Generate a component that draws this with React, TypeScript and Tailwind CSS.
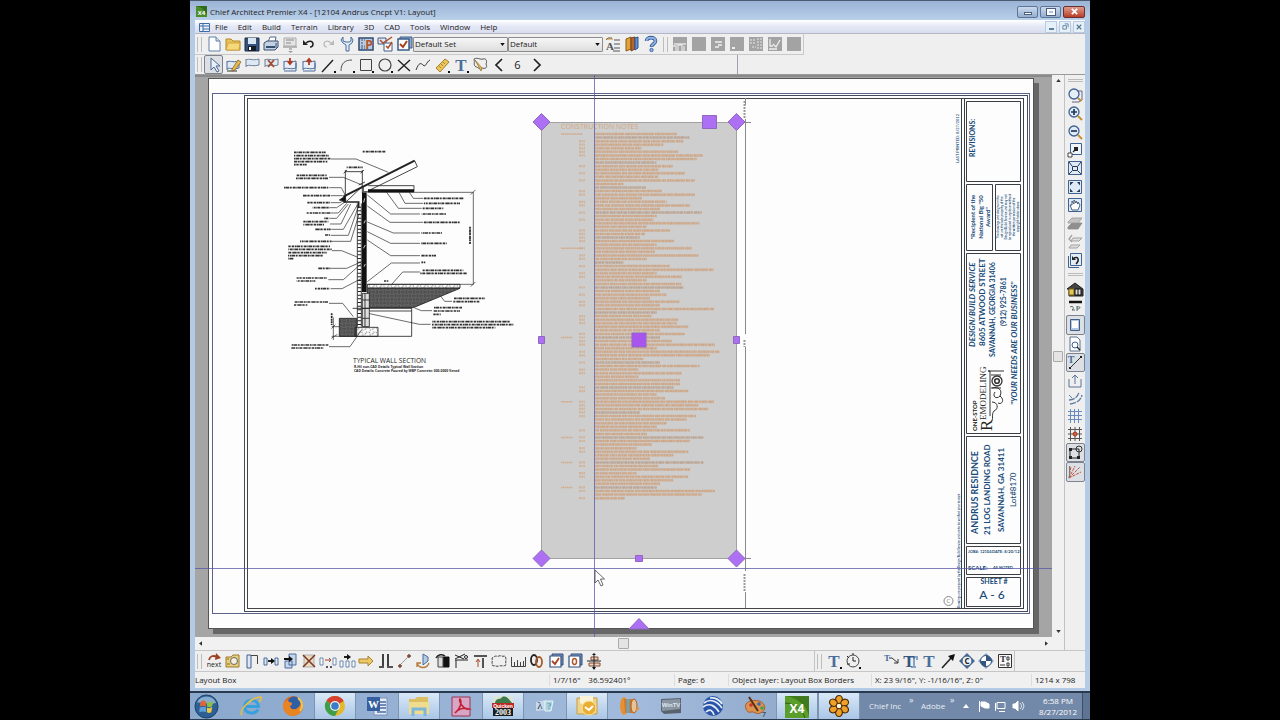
import React from "react";

type Kids = { children?: React.ReactNode };

const NAVY = "#4a6d9c";
const INK = "#222";

function Ico({ children }: Kids) {
  return (
    <svg viewBox="0 0 18 18" className="h-[18px] w-[18px] shrink-0" fill="none" aria-hidden="true">
      {children}
    </svg>
  );
}

function P({ d, c = INK, w = 1, f = "none", dash }: { d: string; c?: string; w?: number; f?: string; dash?: string }) {
  return <path d={d} stroke={c} strokeWidth={w} fill={f} strokeDasharray={dash} />;
}

function Glyph({ t, x = 9, y = 14, s = 16, c = NAVY, serif = true }: { t: string; x?: number; y?: number; s?: number; c?: string; serif?: boolean }) {
  return (
    <text x={x} y={y} fontSize={s} fontWeight="700" fill={c} textAnchor="middle" fontFamily={serif ? "Liberation Serif, serif" : "Open Sans, sans-serif"}>
      {t}
    </text>
  );
}

const wall = "M3 5V14M3 6C6 4 8 7 15 5V12C9 14 6 11 3 13";
const pencil = <P d="M8 13L14 4L17 6L11 14L8 15Z" c="#7a5a20" f="#e5b84e" w={0.7} />;
const redArrowDown = <P d="M9 2V7M6.500 5L9 8L11.500 5" c="#b03a20" w={1.800} />;
const redArrowUp = <P d="M9 9V4M6.500 6L9 3L11.500 6" c="#b03a20" w={1.800} />;
const dot = <P d="M15 15H17V17H15Z" c="none" f="#111" />;

type Tool = [string, React.ReactNode, boolean?];

const fileTools: Tool[] = [
  ["New", <><P d="M4 2H11L15 6V16H4Z" c="#5f7fa8" f="#fff" /><P d="M11 2V6H15" c="#5f7fa8" f="#cfe0f2" /></>],
  ["Open", <><P d="M2 4H7L9 6H16V15H2Z" c="#b58a2b" f="#e9c154" /><P d="M2 15L4 8H16L15 15Z" c="#c59a35" f="#f5d878" w={0.700} /></>],
  ["Save", <><P d="M2 3H16V16H2Z" c="#1d2c44" f="#34527d" /><P d="M5 3H13V9H5Z" c="none" f="#d7e4f2" /><P d="M5 11H13V16H5Z" c="none" f="#141c28" /><P d="M6 12H8V15H6Z" c="none" f="#fff" /></>],
  ["Print", <><P d="M6 7L8 2H14L13 7" c="#516a8e" f="#fff" /><P d="M2 8L5 6H16V12L13 15H2Z" c="#38506f" f="#c3d1e2" /><P d="M4 12H13" c="#38506f" w={2} /><P d="M14 8V13" c="#38506f" /></>],
  ["Print preview", <><P d="M3 3H15V11H3Z" c="#aaa" f="#e4e4e4" /><P d="M5 5H13M5 8H10M2 12H16M8 14H11" c="#a6a6a6" w={1.500} /><P d="M7 16H12L9.500 18Z" c="none" f="#999" /></>],
  ["Undo", <><P d="M6 8C9 5 13 6 13 9C13 11 12 12 10 12" w={1.500} /><P d="M3 5V10H8Z" c="none" f={INK} /></>],
  ["Redo", <><P d="M12 8C9 5 5 6 5 9C5 11 6 12 8 12" c="#b9b9b9" w={1.200} /><P d="M15 5V10H10Z" c="none" f="#b9b9b9" /></>],
  ["Preferences", <><P d="M5 2L3 5L5 8L8 10V16H11V10L14 8L15 5L13 2V6L11 7H8L5 6Z" c="#4b6f9e" f="#dce9f6" /></>],
  ["Plan", <><P d="M2 3H16V15H2Z" c="#2f4a72" f="#b9cce4" w={1.500} /><P d="M4 5H8M4 8H7M4 11H8M4 13H8" c="#456" dash="2 1" /><Glyph t="P" x={12} y={14} s={12} c="#b5532a" serif={false} /></>],
  ["Default settings", <><P d="M2 3H10V9H2Z" c="#3c5c88" f="#dfe9f4" /><P d="M8 8H16V16H8Z" c="#3c5c88" f="#fff" /><P d="M4 5L7 8L16 2M10 11L12 13L16 7" c="#b04a28" w={1.500} /></>],
  ["Display options", <><P d="M5 2H17V13H5Z" c="#3c5c88" f="#8fabcf" /><P d="M3 4H14V15H3Z" c="#3c5c88" f="#fff" w={1.500} /><P d="M5 9L8 12L12 6" c="#a8431f" w={2} /></>],
];

const helpTools: Tool[] = [
  ["Text style", <><P d="M2 5L4 3H8M10 5H16M10 9H16M10 13H16M9 16H16" c="#555" /><Glyph t="A" x={6} y={15} s={11} c="#555" /><P d="M2 4H9" c="#c98b2d" /></>],
  ["Library browser", <><P d="M3 4L8 2V14L3 16Z" c="#8a5a1c" f="#e2a23a" /><P d="M8 3L12 2V14L8 16Z" c="#7c3f1a" f="#b8652c" /><P d="M12 3L15 2V13L12 15Z" c="#2d5590" f="#5f92d2" /></>],
  ["Help", <><P d="M4.500 6C4.500 1.500 13.500 1.500 13.500 6C13.500 9 9.500 9 9.500 12" c="#2d5596" w={3.600} /><P d="M4.500 6C4.500 1.500 13.500 1.500 13.500 6C13.500 9 9.500 9 9.500 11.600" c="#8fb2e2" w={2} /><circle cx="9.500" cy="15" r="1.700" fill="#8fb2e2" stroke="#2d5596" strokeWidth=".8" /></>],
];

const grayBox = <P d="M2 2H16V16H2Z" c="none" f="#a3a3a3" />;
const grayTools: Tool[] = [
  ["Elevation", <>{grayBox}<P d="M2 11H5V16M7 16V10H11V16M13 11V16M3 9H15" c="#e4e4e4" w={1.300} /></>],
  ["Blank view", grayBox],
  ["Cross section", <>{grayBox}<P d="M6 7H13M9 10H13M6 12H10" c="#efefef" w={1.500} /></>],
  ["Detail", <>{grayBox}<P d="M4 13H7" c="#eee" w={2} /></>],
  ["Schedule", <>{grayBox}<P d="M3 5H9M3 8H9M10 4H15M10 7H15M10 10H15M10 13H15M5 12H9" c="#e8e8e8" dash="2 1" /></>],
  ["Graph", <>{grayBox}<P d="M4 4V11H7M7 9L10 12L14 5M3 14H11" c="#efefef" w={1.300} /></>],
  ["Section view", grayBox],
];

const editTools: Tool[] = [
  ["Select objects", <P d="M6 2V14L9 11L12 16L14 15L11 10H15Z" c="#4e6a92" f="#e8f0f8" />, true],
  ["Edit layout box", <><P d={wall} c={NAVY} f="#dfe9f3" /><P d="M3 15H13" c="#333" />{pencil}</>],
  ["Layout page", <><P d="M3 3V11M3 4C6 2 9 5 16 3V9C10 11 6 8 3 10" c="#6f8299" f="#dfe9f3" /></>],
  ["Delete page", <><P d="M3 3V11M3 4C6 2 9 5 16 3V9C10 11 6 8 3 10" c="#6f8299" f="#dfe9f3" /><P d="M6 4L12 11M12 4L6 11" c="#a34b2c" w={1.800} /></>],
  ["Import page", <><P d={wall} c={NAVY} f="#e8eff8" /><P d="M3 15H15V7" c={NAVY} />{redArrowDown}</>],
  ["Export page", <><P d={wall} c={NAVY} f="#e8eff8" /><P d="M3 15H15V7" c={NAVY} />{redArrowUp}</>],
  ["Line", <><P d="M3 16L14 4" w={1.400} />{dot}</>],
  ["Arc", <><P d="M3 15C3 7 7 4 14 4" c="#555" />{dot}</>],
  ["Box", <><P d="M3.500 3.500H14.500V14.500H3.500Z" c="#444" />{dot}</>],
  ["Circle", <><circle cx="9" cy="9" r="6" stroke="#444" strokeWidth="1.200" />{dot}</>],
  ["Cross marker", <P d="M3 4L15 15M15 4L3 15" w={1.400} />],
  ["Spline", <P d="M2 14C5 6 7 7 9 9C12 12 12 6 16 4" c="#333" />],
  ["Measure", <><P d="M3 12L12 3L16 6L7 16Z" c="#a97f25" f="#ebc65d" /><P d="M6 10L8 12M8 8L10 10M10 6L12 8" c="#8f6a1e" w={0.700} />{dot}</>],
  ["Text", <><Glyph t="T" y={15} s={17} />{dot}</>],
  ["Revision cloud", <><P d="M3 3C7 1 9 4 12 3C16 2 16 6 15 8C17 12 14 13 11 12C8 14 7 11 5 11C2 9 4 7 3 3Z" c="#555" /><P d="M4 4L10 15L11 12Z" c="#8a6820" f="#e4bf5e" w={0.700} /></>],
  ["Previous page", <P d="M12 3L6 9L12 15" w={1.700} />],
];

const sideTop: Tool[] = [
  ["Zoom window", <><P d="M10 5H16V14L13 16H6" c="#667" f="#eef" /><circle cx="8" cy="8" r="5" stroke="#3f6390" strokeWidth="1.300" fill="#e6eff8" /><P d="M12 12L15 15" c="#c29034" w={2} /></>],
  ["Zoom in", <><circle cx="8" cy="8" r="5" stroke="#3f6390" strokeWidth="1.300" fill="#dfeaf6" /><P d="M5 8H11M8 5V11" c="#203a5c" w={1.700} /><P d="M12 12L16 16" c="#c29034" w={2} /></>],
  ["Zoom out", <><circle cx="8" cy="8" r="5" stroke="#3f6390" strokeWidth="1.300" fill="#dfeaf6" /><P d="M5 8H11" c="#203a5c" w={1.700} /><P d="M12 12L16 16" c="#c29034" w={2} /></>],
  ["Undo zoom", <><P d="M4.500 2.500H15.500V13.500H4.500Z" c="#3f6390" f="#eef4fa" /><P d="M2 12H6V16H2Z" c="#444" f="#fff" /><P d="M7 11L10 8" w={1.300} /><P d="M8 6H12V10H8Z" c="none" f={INK} /></>],
  ["Fill window", <><P d="M2.500 2.500H15.500V15.500H2.500Z" c="#3f6390" f="#dfeaf6" /><P d="M6.500 7.500H11.500V11.500H6.500ZM3 3L6 7M15 3L12 7M3 15L6 12M15 15L12 12" c="#26384e" /></>],
  ["Fill building", <><P d="M2.500 2.500H15.500V15.500H2.500Z" c="#3f6390" f="#dfeaf6" /><P d="M4 7.500V4L7.500 4ZM11 4H14V7.500ZM14 11V14H10.500ZM7 14H4V10.500Z" c="none" f="#26384e" /></>],
  ["Pan", <><P d="M2.500 2.500H15.500V15.500H2.500Z" c="#3f6390" f="#dfeaf6" /><P d="M6 14L4 9L6 9V5L8 8V4L10 7V5L12 8V6L14 9L12 14Z" c="#3c516e" f="#fff" w={0.900} /></>],
  ["Layers up", <><P d="M2 13L6 9H16L12 15H2Z" c="#8d8d8d" f="#8f8f8f" w={0.800} /><P d="M2 8L6 4H16L12 9H2Z" c="#999" f="#c4c4c4" w={0.800} /></>],
  ["Layers down", <><P d="M7 5H16L13 8H5ZM5 12H14L11 15H3Z" c="#a3a3a3" f="#dedede" /><P d="M6 2L3 6L6 9" c="#a3a3a3" w={1.300} /></>],
  ["Refresh view", <><P d="M4.500 2.500H15.500V14.500H4.500Z" c="#3f6390" f="#e4edf6" /><P d="M2.500 5V16.500H13" c="#3f6390" /><P d="M8 7C12 5 14 9 10 13" w={1.500} /><P d="M6 5V9H10Z" c="none" f={INK} /></>],
];

const sideBottom: Tool[] = [
  ["House view", <><P d="M1 9L9 3L17 9V16H3V9Z" c="#222" f="#444" /><P d="M3 9H8V15H3Z" c="#7a6418" f="#e6c656" /><P d="M9 9H15V15H9Z" c="#111" f="#ddd" /><P d="M12 9V15" c="#111" /></>],
  ["Sound and line", <><P d="M3 5H16" c="#111" w={2.500} /><P d="M4 10C8 8 8 12 6 13H9M11 9V14M11 10C15 9 15 12 11 12" c="#566" /></>],
  ["Color view", <><P d="M4.500 3.500H13.500V14.500H4.500Z" c="#3f5f8a" f="#b4c8e0" /><P d="M6 5H12V12H6Z" c="none" f="#fff" /></>, true],
  ["Page preview", <><P d="M4 2H11L14 5V16H4Z" c="#57708f" f="#fff" /><circle cx="9" cy="10" r="3" stroke="#3f6390" /><P d="M11 12L14 15" w={1.300} /></>],
  ["Temporary dimensions", <><P d="M4 15L15 4" c="#333" /><P d="M3 14H5V16H3ZM14 3H16V5H14Z" c="none" f="#222" /><Glyph t="T" x={5} y={10} s={10} /></>, true],
  ["Reference floor", <><P d="M3 7V15H15V7M9 12V4M6 6L9 3L12 6" c="#5a759b" /></>],
  ["Arc centers", <><P d="M3 10C8 10 12 7 13 2M4 14C11 13 15 10 16 5" c="#5f7da7" w={1.300} dash="6 1" /><P d="M3 5L6 8" c="#5f7da7" /></>],
  ["Grid", <P d="M2 4.500H16M2 8.500H16M2 12.500H16M4.500 2V16M8.500 2V16M12.500 2V16" c="#6a8abb" />],
  ["Grid snaps", <><P d="M2 4.500H16M2 9H16M2 13.500H16M4.500 2V16M9 2V16M13.500 2V16" c="#555" /><circle cx="9" cy="9" r="2" stroke="#a3371f" fill="#d0603f" /></>],
  ["Object snaps", <><P d="M4 5H13V14H4Z" /><P d="M3 4H6V7H3ZM3 12H6V15H3ZM11 12H14V15H11Z" c="none" f="#222" /><circle cx="13" cy="5" r="3" stroke="#333" /></>, true],
  ["Angle snaps", <><P d="M3 15L5 3M3 15L9 3M3 15L14 4M3 15L15 9" c="#c2533f" dash="3 1" /><P d="M3.500 3V15" c="#777" /></>, true],
];

const post = (x: number) => `M${x} 6H${x + 3}V13H${x}Z`;
const bottomTools: Tool[] = [
  ["Next", <><P d="M4 8C5 4 8 3 12 5" c="#9b4424" w={1.800} /><P d="M11 1L16 6L10 8Z" c="none" f="#9b4424" /><text x="9" y="15" fontSize="7" textAnchor="middle" fill="#222" fontFamily="Open Sans, sans-serif">next</text></>],
  ["Camera", <><P d="M2 5H7L9 3H15V15H2Z" c="#9d7a30" f="#e8cf79" /><circle cx="10" cy="9" r="3.500" stroke="#666" fill="#f4f0dd" /><P d="M3 7H5M3 12H6" c="#8a6820" /></>],
  ["Open object", <><P d="M4 3H8V16H4Z" c="#3f5f8a" f="#dbe7f4" /><P d="M8 3.500H14.500V12" c="#444" /></>],
  ["Move right", <><P d={post(2) + post(13)} c={NAVY} f="#dbe7f4" /><P d="M6 9H10" w={2} /><P d="M9 6L13 9L9 12Z" c="none" f="#111" /></>],
  ["Transform", <><P d="M8 2H15V13H8ZM4 9H11V16H4Z" c={NAVY} f="#c5d6ea" /><P d="M3 7H9" c="#111" w={2} /><P d="M8 4L12 7L8 10Z" c="none" f="#111" /></>],
  ["Delete", <><P d="M4 3H14V15H4Z" c="#999" f="#ead9c4" w={0.700} /><P d="M3 3L15 15M15 3L3 15" c="#7a3a20" w={1.500} /></>],
  ["Copy distance", <><P d={post(1) + post(14)} c={NAVY} f="#fff" w={0.800} /><P d="M6 8H12M10 6L12 8L10 10" c="#a34b2c" /><P d="M7 15H9M11 15H13" w={1.500} /></>],
  ["Multiple copy", <><P d="M2 9H5V15H2ZM8 9H11V15H8ZM14 9H17V15H14Z" c={NAVY} f="#fff" w={0.800} /><P d="M6 5H10" w={2} /><P d="M9 2L13 5L9 8Z" c="none" f="#111" /></>],
  ["Point to point", <P d="M2 7H11V4L16 9L11 14V11H2Z" c="#a9812c" f="#ecc866" />],
  ["Align", <P d="M7 2V14M12 2V14M3 15H8M11 15H17" w={1.700} />],
  ["Extend line", <><P d="M4 14L14 4" c="#777" dash="2 1" /><P d="M3 14H7M5 12V16M12 4H16M14 2V6" c="#7a4030" w={1.400} /></>],
  ["Rotate", <><P d="M9 2V13L14 9V5Z" c="#466b9a" f="#b7cbe3" /><P d="M3 11C5 17 13 17 15 11M3 15V11H7" c="#b67834" w={1.300} /></>],
  ["Reflect", <><P d="M10 5H16V15H10Z" c="#111" f="#111" /><P d="M5 5H10V15H5Z" c="#444" f="#ddd" /><P d="M3 6C5 2 9 2 12 4" w={1.500} /></>],
  ["Trim", <><P d="M3 8H16M4 8V16M3 3L12 7M3 7L13 2" /><circle cx="14" cy="5" r="1.500" stroke="#222" /></>],
  ["Fillet", <><P d="M3 4H16M12 6V16" w={1.500} /><P d="M7 15V8M5 10L7 7L9 10" c="#a34b2c" /></>],
  ["Polyline", <P d="M4 5C6 3 7 5 9 4C11 3 12 5 15 4C17 7 15 9 16 13C13 15 12 13 9 14C6 15 5 13 3 14C1 11 3 9 2 6Z" c="#444" dash="3 1" />],
  ["Ruler", <P d="M2.500 5V14.500H16.500V5M5.500 10V14M8.500 8V14M11.500 10V14M14.500 9V14" c="#444" />],
  ["Link", <><ellipse cx="6" cy="8" rx="3" ry="5" stroke="#222" strokeWidth="1.800" /><ellipse cx="11" cy="10" rx="3" ry="5" stroke="#a55a2c" strokeWidth="1.800" /></>],
  ["Check layers", <><P d="M5 2H16V13H5Z" c="#304f7c" f="#7898c4" /><P d="M3 4H14V15H3Z" c="#304f7c" f="#fff" w={1.200} /><P d="M5 9L8 12L12 6" c="#a8431f" w={1.800} /></>],
  ["Zero layers", <><P d="M5 2H16V13H5Z" c="#304f7c" f="#7898c4" /><P d="M3 4H14V15H3Z" c="#304f7c" f="#fff" w={1.200} /><ellipse cx="8.500" cy="9.500" rx="2" ry="3" stroke="#b0552b" strokeWidth="1.500" /></>],
  ["Center", <><P d="M6 5H13V8H6ZM4 11H15V14H4Z" c="#8a4a30" f="#e8d5c5" /><P d="M9 2V17M2 9H16" /><P d="M7 3H11L9 1ZM7 15H11L9 18Z" c="none" f="#111" /></>],
];

const textToolsA: Tool[] = [
  ["Text tool", <><Glyph t="T" y={15} s={17} />{dot}</>],
  ["Clock tool", <><circle cx="9" cy="9" r="6" stroke="#444" /><P d="M9 5V9H12M9 1V3M3 4L5 6" /><P d="M3 12H6" />{dot}</>],
];
const textToolsB: Tool[] = [
  ["Leader line", <><Glyph t="T" x={5} y={9} s={9} /><P d="M7 6H10L16 11M16 7V11H12" c="#333" /></>],
  ["Rich text", <><P d="M6 5H16V8M13 5V15M10 15H15" c="#8ba3c2" w={2} /><Glyph t="T" x={8} y={15} s={17} c="#34557f" /></>],
  ["Plain text", <Glyph t="T" y={15} s={17} />],
  ["Arrow", <><P d="M3 16L13 5" w={1.600} /><P d="M16 2L14 9L9 4Z" c="none" f="#111" /></>],
  ["Callout", <><P d="M9 1L17 9L9 17L1 9Z" c="none" f="#4a6d9c" /><circle cx="9" cy="9" r="5" fill="#eef4fa" stroke="#34557f" /><Glyph t="C" y={12} s={8} c="#222" serif={false} /></>],
  ["Marker", <><P d="M9 1L17 9L9 17L1 9Z" c="none" f="#8ba3c2" /><circle cx="9" cy="9" r="5.500" fill="#fff" stroke="#34557f" /><P d="M9 9V3.500A5.500 5.500 0 0 1 14.500 9ZM9 9V14.500A5.500 5.500 0 0 1 3.500 9Z" c="none" f="#34557f" /></>],
  ["Text macro", <><P d="M2.500 2.500H15.500V15.500H2.500Z" c="#333" f="#f8f8f8" /><Glyph t="T" x={7} y={10} s={9} c="#333" /><P d="M11 5H13V8H11ZM11 11H13V14H11ZM4 13H9" c="#333" /></>],
];

function Tools({ items, vertical }: { items: Tool[]; vertical?: boolean }) {
  return (
    <>
      {items.map(([label, icon, on]) => (
        <button
          key={label}
          type="button"
          aria-label={label}
          className={
            (vertical ? "w-[19px] min-h-0 flex-1 " : "h-[19px] w-[19px] ") +
            "flex shrink-0 items-center justify-center " +
            (on ? "rounded-[2px] border border-[#7d838c] bg-[#dcdfe4]" : "")
          }
        >
          <Ico>{icon}</Ico>
        </button>
      ))}
    </>
  );
}

function Grip() {
  return <span className="mx-[2px] h-[15px] w-[5px] shrink-0 border-x border-[#bdbdbd]" />;
}

function Pick({ label, value }: { label: string; value: string }) {
  return (
    <div className="relative h-[15px] w-[95px] shrink-0">
      <select
        aria-label={label}
        defaultValue={value}
        className="h-full w-full appearance-none rounded-[1px] border border-[#8c8c8c] bg-gradient-to-b from-[#f6f6f6] to-[#dedede] pl-px text-[8px] leading-[12px]"
      >
        <option>{value}</option>
      </select>
      <svg viewBox="0 0 6 4" className="pointer-events-none absolute right-[3px] top-[6px] h-[3px] w-[5px]" aria-hidden="true">
        <path d="M0 0H6L3 4Z" fill="#111" />
      </svg>
    </div>
  );
}

const noteStart = 134;
const notePitch = 3.57;
const noteEnds = [
  440, 478, 462, 400, 335, 445, 518, 500, 380, 428, 385, 465, 385, 495, 280, 348, 395, 495, 335, 410, 480, 390, 515, 380, 370, 508,
  350, 420, 345, 330, 432, 380, 485, 375, 505, 350, 280, 420, 550, 380, 455, 350, 455, 460, 390, 410, 360, 448, 390, 552, 380, 365,
  445, 440, 475, 390, 465, 390, 425, 555, 380, 568, 540, 340, 390, 508, 325, 455, 325, 450, 450, 430, 475, 380, 405, 552, 505, 535,
  330, 498, 470, 410, 380, 480, 350, 520, 480, 365, 320, 475, 430, 360, 520, 385, 480, 320, 475, 430, 390, 380, 555, 515, 285,
];
const sectionRows = [0, 32, 57, 75, 85, 92, 99];
const itemRows = [2, 3, 4, 5, 6, 9, 11, 13, 16, 17, 19, 20, 22, 24, 27, 28, 29, 30, 32, 34, 35, 37, 39, 40, 43, 45, 47, 48, 51, 52, 53, 56, 57, 58, 59, 61, 62, 64, 66, 67, 71, 72, 75, 76, 77, 78, 79, 83, 85, 86, 88, 89, 92, 93, 95, 96, 99, 100, 102];
const dashes = ["9 1 5 1 13 1", "6 1 11 1 4 1", "14 1 7 1 9 1", "4 1 8 1 12 1 5 1"];
const strokesOfText = ["1.3 .7 2.1 .5 .8 .6", ".9 .5 1.7 .8 2.6 .6", "2.3 .6 1.1 .7", "1.6 .5 .7 .6 2.9 .7"];

function Notes() {
  return (
    <g>
      <text x="561" y="129" fontSize="7" fill="#d3a67c" fontFamily="Open Sans, sans-serif">CONSTRUCTION NOTES</text>
      {noteEnds.map((end, i) => {
        const y = noteStart + i * notePitch;
        const right = 530 + end / 3;
        return (
          <g key={i} stroke="#d2a37c">
            <path d={`M595 ${y}H${right}`} strokeWidth="3" strokeDasharray={dashes[i % 4]} opacity="0.4" />
            <path d={`M595 ${y}H${right}`} strokeWidth="2" strokeDasharray={strokesOfText[(i * 3 + (i >> 2)) % 4]} strokeDashoffset={i * 1.7} stroke={i % 7 === 1 ? "#a99a90" : "#cd9d75"} opacity="0.65" />
            {sectionRows.includes(i) && <path d={`M561 ${y}H${i === 0 || i === 32 ? 583 : 573}`} strokeWidth="1.500" strokeDasharray="1.500 .5" opacity="0.8" />}
            {itemRows.includes(i) && <path d={`M579 ${y}H585`} strokeWidth="2.200" strokeDasharray="2 .5" opacity="0.6" />}
          </g>
        );
      })}
    </g>
  );
}

const smallNotes: [number, number, number][] = [
  [42, 37, 137], [42, 47, 148], [42, 56, 152], [42, 65, 142], [42, 74, 80], [246, 35, 316], [200, 82, 248], [48, 106, 140], [48, 115, 146],
  [10, 143, 145], [68, 167, 150], [82, 188, 150], [98, 203, 150], [80, 219, 150], [132, 235, 148], [70, 245, 145], [70, 254, 132],
  [105, 268, 152], [135, 285, 150], [60, 304, 155], [24, 319, 150], [24, 328, 156], [24, 338, 140], [24, 347, 130], [24, 356, 40],
  [115, 385, 152], [50, 414, 142], [50, 423, 106], [105, 446, 150], [42, 486, 145], [42, 495, 82], [33, 615, 146], [33, 624, 130],
  [432, 175, 550], [432, 190, 540], [428, 205, 490], [424, 222, 498], [432, 247, 540], [424, 279, 486], [424, 310, 500], [424, 347, 468],
  [424, 367, 436], [426, 391, 550], [420, 400, 560], [520, 475, 614], [520, 485, 598], [460, 503, 546], [460, 513, 540], [460, 523, 482],
  [456, 545, 690], [456, 554, 700], [456, 563, 646], [312, 423, 326],
];

function WallSection() {
  return (
    <g transform="translate(280 140) scale(.33333)" fill="none" stroke="#222" strokeWidth="2.500">
      <defs>
        <pattern id="soil" width="22" height="22" patternUnits="userSpaceOnUse">
          <rect width="22" height="22" fill="#8a8a8a" stroke="none" />
          <path d="M0 3H11M0 8H11M14 0V11M19 0V11M11 14H22M11 19H22M3 11V22M8 11V22" stroke="#1b1b1b" strokeWidth="2.500" />
        </pattern>
        <pattern id="gravel" width="22" height="14" patternUnits="userSpaceOnUse">
          <path d="M2 3l4 2M12 9l5 -4M5 11h3M18 1l1 3" stroke="#222" strokeWidth="2" />
        </pattern>
      </defs>
      {smallNotes.map(([a, y, b], n) => (
        <path key={`${a}-${y}`} d={`M${a} ${y}H${b}`} strokeWidth="5" strokeDasharray="8 2 3 1 11 2 5 1 2 2" strokeDashoffset={n * 5} stroke="#333" />
      ))}
      <path d="M152 57H228L325 97M147 112H190L246 135M148 143H184L198 170M152 167H188M152 188H180L195 180M150 203H170L198 184M150 219H175L200 190M150 235H170L205 192M150 252H183L212 192M154 268H190L232 195M152 286H205L235 200M156 304H212L238 220M156 332H185L234 352M152 385H200L245 365M145 419H190L245 370M152 446H186L255 410M147 490H188L220 530M147 620H210L246 568" strokeWidth="2" />
      <path d="M430 175H400L388 157M430 190H375L357 157M425 205H355L320 157M420 222H332L262 165M430 247H330L262 198M420 279H340L262 246M420 310H332L262 275M420 347H332L262 300M420 369H334L262 425M420 396H368L336 432M516 484H494L480 466M456 512H424L404 504M452 553H418L264 520" strokeWidth="2" />
      <path d="M190 170L404 62" strokeWidth="6" />
      <path d="M200 184L246 140M270 150L412 80L404 62M196 95H247M196 90V170M247 90V160M191 100L201 90M242 100L252 90" />
      <path d="M178 180L196 168L198 186Z" fill="#111" />
      <path d="M190 186H236V204" strokeWidth="5" />
      <path d="M236 135L255 126M250 142V155H402V137H265" />
      <path d="M264 152H402" strokeWidth="9" stroke="#111" />
      <path d="M253 157V456" strokeWidth="14" stroke="#111" />
      <path d="M232 190V560M244 190V560" />
      <path d="M238 200V560" strokeWidth="11" strokeDasharray="3 8" />
      <path d="M254 175l-3 12M252 250l4 -9M250 325l6 -10M252 380l4 -8" stroke="#eee" />
      <path d="M262 157H580V433H262M572 164L586 150M572 440L586 426" strokeWidth="2" />
      <path d="M570 260V312" strokeWidth="5" strokeDasharray="6 2 10 1" />
      <path d="M262 433H540V444H262Z" fill="url(#gravel)" />
      <path d="M262 445H540L400 503H262Z" fill="url(#soil)" />
      <path d="M247 460H268V560H247Z" fill="#ddd" />
      <path d="M247 480H268M247 505H268M247 535H268M255 460V560" />
      <path d="M218 505H395V589H178M395 513H270" strokeWidth="2.500" />
      <path d="M178 535H230V589H178Z" fill="url(#soil)" />
      <path d="M225 562H294V589H225Z" fill="url(#gravel)" />
      <path d="M160 532V600M155 560H178M155 589H178M154 566L166 554M154 595L172 583" strokeWidth="2" />
      <path d="M155 520V555" strokeWidth="5" strokeDasharray="6 2" />
      <g stroke="none" fill="#222" fontFamily="Open Sans, sans-serif">
        <text x="219" y="668" fontSize="20">TYPICAL WALL SECTION</text>
        <text x="222" y="684" fontSize="10" fontWeight="700">R-Hil non-CAD Details Typical Wall Section</text>
        <text x="222" y="697" fontSize="10" fontWeight="700">CAD Details: Concrete Poured by WBP Concrete: 000-0000 Vened</text>
      </g>
    </g>
  );
}

function Up({ x, y, s, children, b, i, mid, c = "#174a78", serif }: { x: number; y: number; s: number; children: string; b?: boolean; i?: boolean; mid?: boolean; c?: string; serif?: boolean }) {
  return (
    <text
      transform={`translate(${x} ${y}) rotate(-90)`}
      fontSize={s}
      fill={c}
      fontWeight={b ? 700 : 500}
      fontStyle={i ? "italic" : undefined}
      textAnchor={mid ? "middle" : undefined}
      fontFamily={serif ? "Liberation Serif, serif" : "Lato, sans-serif"}
    >
      {children}
    </text>
  );
}

function TitleBlock() {
  return (
    <g>
      <g fill="none" stroke="#3a3f46">
        <path d="M961.500 98V608M964.500 98.500H1023.500V608.500H964.500Z" />
        <path d="M966.500 101.500H1020.500V181.500H966.500ZM966.500 184.500H992.500V250.500H966.500ZM995.500 184.500H1020.500V250.500H995.500ZM966.500 253.500H1020.500V433.500H966.500ZM966.500 436.500H1020.500V543.500H966.500ZM966.500 546.500H1020.500V574.500H966.500ZM966.500 577.500H1020.500V606.500H966.500Z" />
      </g>
      <Up x={959} y={163} s={4}>LAST PRINTED: 8/27/2012</Up>
      <Up x={975} y={157} s={7} b>REVISIONS:</Up>
      <Up x={975} y={217} s={6} b mid>"Recipient of the</Up>
      <Up x={983} y={217} s={6} b mid>National Big "50</Up>
      <Up x={990} y={217} s={6} b mid>Award"</Up>
      {["The drawings and designs in this", "set are the sole property of the", "Design/Build Service and may not", "be reproduced in any form without", "the written permission of the", "copyright holder above"].map((t, n) => (
        <Up key={t} x={999 + n * 4} y={217} s={3} b mid>{t}</Up>
      ))}
      <Up x={975} y={347} s={8} b i>DESIGN/BUILD SERVICE</Up>
      <Up x={985} y={346} s={8} b>8605 ATWOOD STREET</Up>
      <Up x={995} y={357} s={7} b>SAVANNAH, GEORGIA 31406</Up>
      <Up x={1006} y={326} s={7} b>(912) 925-7861</Up>
      <Up x={1017} y={405} s={8} b i>"YOUR NEEDS ARE OUR BUSINESS"</Up>
      <Up x={977} y={431} s={6} b c="#222">ONE-STOP</Up>
      <Up x={992} y={431} s={17} c="#222" serif>R</Up>
      <Up x={986} y={420} s={9} c="#222" serif>EMODELING</Up>
      <g fill="none" stroke="#333">
        <path d="M988 371H990V416M988 371H1004M991 375H1001" />
        <circle cx="997" cy="381" r="5" strokeWidth="1.300" />
        <circle cx="997" cy="381" r="2.300" strokeWidth="1.600" />
        <path d="M992 388C998 386 1003 390 1000 396C996 400 992 396 995 392M1000 396C1005 400 1002 405 998 403M992 402C998 402 999 409 994 411C991 414 994 420 991 422M991 388L1001 388" />
      </g>
      <Up x={978} y={534} s={9} b>ANDRUS RESIDNCE</Up>
      <Up x={990} y={535} s={8} b>21 LOG LANDING ROAD</Up>
      <Up x={1004} y={532} s={8} b>SAVANNAH, GA 31411</Up>
      <Up x={1016} y={507} s={8}>Lot#8170</Up>
      <g fill="#174a78" fontFamily="Lato, sans-serif" fontWeight="700">
        <text x="968" y="553" fontSize="4">JOB#: 12104</text>
        <text x="992" y="553" fontSize="4">DATE: 8/20/12</text>
        <text x="968" y="570" fontSize="6">SCALE:</text>
        <text x="993" y="569" fontSize="4">AS NOTED</text>
        <text x="994" y="584" fontSize="7" textAnchor="middle">SHEET #</text>
        <text x="992" y="599" fontSize="12" fontWeight="500" textAnchor="middle">A - 6</text>
      </g>
      <Up x={960} y={608} s={3} b>Drawings are prepared by the Design/Build Service and are to be verified prior to start</Up>
      <circle cx="948.500" cy="601" r="4.500" fill="none" stroke="#888" />
      <text x="948.500" y="603" fontSize="6" textAnchor="middle" fill="#888" fontFamily="Open Sans, sans-serif">C</text>
    </g>
  );
}

function Drawing() {
  return (
    <svg viewBox="195 75 857 562" className="h-full w-full" role="img" aria-label="Layout sheet A-6">
      <rect x="195" y="75" width="857" height="562" fill="#a5a5a5" />
      <rect x="195" y="75" width="857" height="2" fill="#8a8a8a" />
      <rect x="213" y="83" width="826" height="551" fill="#676767" />
      <rect x="208.500" y="78.500" width="825" height="550" fill="#fdfdfd" stroke="#555" />
      <g fill="none">
        <rect x="212.500" y="93.500" width="817" height="520" stroke="#5b6488" />
        <rect x="244.500" y="95.500" width="783" height="516" stroke="#444a5c" />
        <rect x="247.500" y="98.500" width="776" height="510" stroke="#444" />
      </g>
      <WallSection />
      <TitleBlock />
      <path d="M745.500 98V105M745.500 119V334M745.500 347V571M745.500 592V608M738 122.500H751M738 558.500H751" stroke="#8a8a8a" />
      <path d="M744.500 101V118M744.500 340V347M744.500 574V591" stroke="#999" strokeWidth="2" strokeDasharray="2 1" />
      <rect x="541.500" y="122.500" width="195" height="436" fill="#cecece" stroke="#a2a2a2" />
      <Notes />
      <path d="M594.500 75V637M195 568.500H1052" stroke="#5555a5" strokeOpacity="0.75" />
      <g fill="#ad70f5" stroke="#9068c0">
        <path d="M541.500 113.500L550 122L541.500 130.500L533 122ZM736.500 113.500L745 122L736.500 130.500L728 122ZM541.500 550L550 558.500L541.500 567L533 558.500ZM736.500 550L745 558.500L736.500 567L728 558.500Z" />
        <path d="M702.500 115.500H716.500V128.500H702.500ZM538.500 336.500H544.500V343.500H538.500ZM733.500 336.500H739.500V343.500H733.500ZM635.500 555.500H642.500V561.500H635.500Z" />
        <path d="M629 629L639 618.500L649 629Z" />
        <rect x="632" y="333" width="14" height="14" fill="#a855f0" />
      </g>
      <path d="M595 570V583L598 580L601 586L603 585L600.500 579H604.500Z" fill="#fff" stroke="#444" strokeWidth="0.800" />
    </svg>
  );
}

function TaskIco({ children }: Kids) {
  return (
    <svg viewBox="0 0 24 24" className="h-[24px] w-[24px]" fill="none" aria-hidden="true">
      {children}
    </svg>
  );
}

const petals = [0, 60, 120, 180, 240, 300];

const taskItems: [string, boolean, React.ReactNode][] = [
  ["Internet Explorer", false, <><path d="M6 12.500H19.500C19 4 6 4 5.500 12.500C5.500 20 16 21 19 15.500" stroke="#3aa0dc" strokeWidth="3" /><path d="M3 21C-1 17 12 3 22 3C23 5 21 7 20 8" stroke="#e8bf3e" strokeWidth="1.600" /></>],
  ["Firefox", false, <><circle cx="12" cy="12" r="10" fill="#de6a1e" /><circle cx="13" cy="9" r="6.500" fill="#2c5fa8" /><path d="M2 11C4 6 7 5 8 8C12 8 12 11 9 12C10 17 17 17 21 8C24 17 17 22 12 22C6 22 2 17 2 11Z" fill="#e98422" /><path d="M17 4C22 8 22 13 19 17" stroke="#f4c443" strokeWidth="2" /></>],
  ["Chrome", true, <><circle cx="12" cy="12" r="10" fill="#e3b92b" /><path d="M12 12L3.300 7A10 10 0 0 1 20.700 7Z" fill="#d6402f" /><path d="M12 12L3.300 7A10 10 0 0 0 12 22L16 14Z" fill="#3f9e4c" /><circle cx="12" cy="12" r="5" fill="#f2f2f2" /><circle cx="12" cy="12" r="3.800" fill="#3c7bc9" /></>],
  ["Word", false, <><path d="M9 4H22V21H9Z" fill="#e6edf7" stroke="#7690b8" /><path d="M15 8H21M15 11H21M15 14H21M12 18H21" stroke="#496da5" strokeWidth="1.300" /><path d="M2 3H15V17H2Z" fill="#355f9f" /><text x="8.500" y="14" fontSize="11" fontWeight="700" fill="#fff" textAnchor="middle" fontFamily="Liberation Serif, serif">W</text></>],
  ["Windows Explorer", true, <><path d="M2 5H8L10 3H21V20H2Z" fill="#dcbf62" /><path d="M2 8H22V20H2Z" fill="#f0dc8e" /><path d="M6 22V15H18V22" stroke="#7db6d8" strokeWidth="3" /></>],
  ["Adobe Reader", false, <><path d="M3 3H21V22H3Z" fill="#d9a5c4" stroke="#9b3550" /><path d="M6 19C12 14 13 8 11 5C9 6 14 16 20 15C15 13 9 15 6 19Z" stroke="#c32036" strokeWidth="1.600" /></>],
  ["Quicken 2003", true, <><path d="M2 2H22V22H2Z" fill="#dce6d8" /><path d="M4 10C4 3 10 6 11 3C16 1 18 6 21 9Z" fill="#3f7a4b" /><path d="M1 9H23V14H1Z" fill="#b92a22" /><path d="M2 14H22V22H2Z" fill="#1b1b1b" /><text x="12" y="13.500" fontSize="5" fontWeight="700" fill="#fff" textAnchor="middle" fontFamily="Liberation Sans, sans-serif">Quicken</text><text x="12" y="21" fontSize="8" fontWeight="700" fill="#fff" textAnchor="middle" fontFamily="Liberation Serif, serif">2003</text></>],
  ["Converter", false, <><path d="M3 8L13 6V16L3 17Z" fill="#c9d7e8" /><path d="M12 7H20L18 17H12Z" fill="#a9d2dc" stroke="#e8f4f6" /><text x="7" y="15" fontSize="11" fill="#263f60" textAnchor="middle" fontFamily="Liberation Serif, serif">λ</text><text x="16" y="15" fontSize="9" fill="#4a7f9c" textAnchor="middle" fontFamily="Liberation Serif, serif">?</text></>],
  ["Outlook", true, <><path d="M2 4H22V20H2Z" fill="#f0d289" stroke="#c69e42" /><path d="M5 2H18V9L12 13L5 9Z" fill="#fbf3d7" /><circle cx="14" cy="14" r="7" fill="#e8ae32" stroke="#fae29a" /><path d="M10 13L14 16L18 12" stroke="#fff" strokeWidth="2" /></>],
  ["Media player", false, <><ellipse cx="7" cy="12" rx="4" ry="9" fill="#e69035" /><path d="M7 5H18V19H8Z" fill="#c87a31" /><path d="M11 5V19" stroke="#6fa3b8" strokeWidth="3" /><ellipse cx="17" cy="12" rx="3" ry="7" fill="#e8c295" stroke="#a8622a" /><path d="M19 16L22 14" stroke="#e69035" strokeWidth="2" /></>],
  ["WinTV", false, <><path d="M2 5L22 4V19L5 20L2 17Z" fill="#59636e" /><path d="M3 6L21 5V15L3 17Z" fill="#8995a2" /><text x="12" y="13" fontSize="6" fontWeight="700" fill="#dfe6ee" textAnchor="middle" fontFamily="Liberation Sans, sans-serif">WinTV</text></>],
  ["Google Earth", false, <><circle cx="12" cy="12" r="10" fill="#2853a8" /><path d="M3 9C9 4 16 7 21 14M2 13C9 8 14 12 18 18M5 18C9 14 12 17 13 21M9 4C14 3 19 6 21 10" stroke="#e4ecf8" strokeWidth="1.700" /></>],
  ["Paint", false, <><path d="M3 15C0 8 9 5 16 7C23 9 24 17 17 19C13 21 11 17 8 18C5 19 4 17 3 15Z" fill="#dc9350" stroke="#a85e29" /><circle cx="16" cy="10" r="1.800" fill="#3565b5" /><circle cx="19" cy="14" r="1.800" fill="#3fa051" /><circle cx="8" cy="11" r="1.800" fill="#c93434" /><path d="M6 3L15 17" stroke="#5a3018" strokeWidth="2" /><text x="19" y="23" fontSize="7" fill="#222" fontFamily="Open Sans, sans-serif">7</text></>],
  ["Chief Architect X4", true, <><path d="M0 2H24V24H0Z" fill="#3f7a1c" /><path d="M0 2C12 3 22 12 24 22V24H0Z" fill="#5c9e2a" /><path d="M0 9C8 9 18 16 20 24" stroke="#2e5f12" /><text x="12" y="19" fontSize="12" fontWeight="700" fill="#fff" textAnchor="middle" fontFamily="Open Sans, sans-serif">X4</text></>],
  ["GoToMeeting", true, <>{petals.map((a) => <ellipse key={a} cx="12" cy="5.500" rx="3.400" ry="4" fill="#f0a028" stroke="#4a2c08" strokeWidth="1.200" transform={`rotate(${a} 12 12)`} />)}<circle cx="12" cy="12" r="2.800" fill="#fff3d8" stroke="#4a2c08" /></>],
];

const menus = ["File", "Edit", "Build", "Terrain", "Library", "3D", "CAD", "Tools", "Window", "Help"];
const captionBtn = "flex h-[12px] w-[21px] items-center justify-center rounded-[2px] border border-[#5f7595] bg-gradient-to-b from-[#cbdaee] to-[#94aed0]";
const mdiBtn = "flex h-[12px] w-[12px] items-center justify-center border border-[#b9cbe0] bg-[#e6f0f8]";

export default function App() {
  return (
    <div className="flex h-screen min-h-[720px] justify-center bg-black font-['Open_Sans','Noto_Sans',sans-serif] text-[8px] leading-[12px] text-[#222]">
      <div className="flex w-full max-w-[900px] flex-col">
        <div className="flex min-h-0 flex-1 flex-col border-t border-[#4d5b70] bg-[#b4cbe6] px-[5px] pb-[3px]">
          <header className="-mx-[5px] flex h-[19px] shrink-0 items-center bg-gradient-to-b from-[#9bb3d5] to-[#b9d0ea] pl-[6px] pr-[5px] pt-[2px]">
            <svg viewBox="0 0 11 11" className="mr-[3px] h-[11px] w-[11px]" aria-hidden="true">
              <path d="M0 0H11V11H0Z" fill="#2f6a1c" />
              <path d="M0 0C6 1 10 5 11 9V11H0Z" fill="#4b8c2b" />
              <text x="5.500" y="9" fontSize="6" fontWeight="700" fill="#fff" textAnchor="middle">X4</text>
            </svg>
            <h1 className="flex-1">Chief Architect Premier X4 - [12104 Andrus Cncpt V1: Layout]</h1>
            <div className="flex gap-[2px]">
              <button type="button" aria-label="Minimize" className={captionBtn}><span className="mt-[3px] h-[3px] w-[8px] border border-[#4d5f78] bg-white" /></button>
              <button type="button" aria-label="Restore" className={captionBtn}><span className="h-[6px] w-[8px] border-2 border-white outline outline-1 outline-[#4d5f78]" /></button>
              <button type="button" aria-label="Close" className="flex h-[12px] w-[22px] items-center justify-center rounded-[2px] border border-[#6a3030] bg-gradient-to-b from-[#dd9a8c] to-[#b83c28]">
                <svg viewBox="0 0 8 8" className="h-[7px] w-[7px]" aria-hidden="true"><path d="M1 1L7 7M7 1L1 7" stroke="#fff" strokeWidth="2" /></svg>
              </button>
            </div>
          </header>

          <nav className="flex h-[14px] shrink-0 items-center border-b border-[#b5b8c2] bg-gradient-to-b from-white via-[#e4e8f6] to-[#d9deef] pl-[4px]">
            <svg viewBox="0 0 11 10" className="h-[10px] w-[11px]" aria-hidden="true">
              <path d="M.5 1.500H10.500V9.500H.5ZM.5 4H10.500M4 1.500V9.500M4 7H10.500" fill="#e8f1fb" stroke="#3f6ca5" />
            </svg>
            {menus.map((m) => (
              <button key={m} type="button" className="px-[5px]">{m}</button>
            ))}
            <div className="ml-auto flex gap-[2px]">
              <button type="button" aria-label="Minimize sheet" className={mdiBtn}><span className="mt-[4px] h-[2px] w-[5px] bg-[#5c7f9c]" /></button>
              <button type="button" aria-label="Restore sheet" className={mdiBtn}><svg viewBox="0 0 8 8" className="h-[7px] w-[7px]" aria-hidden="true"><path d="M3 1H7V5M1 3H5V7H1Z" fill="none" stroke="#5c7f9c" /></svg></button>
              <button type="button" aria-label="Close sheet" className={mdiBtn}><svg viewBox="0 0 8 8" className="h-[6px] w-[6px]" aria-hidden="true"><path d="M1 1L7 7M7 1L1 7" stroke="#4d7a8c" strokeWidth="1.500" /></svg></button>
            </div>
          </nav>

          <div className="shrink-0 bg-[#efefef]">
            <div className="flex h-[21px] w-[609px] items-center border-b border-r border-[#c8c8c8]">
              <Grip />
              <Tools items={fileTools} />
              <Pick label="Layer set" value="Default Set" />
              <Pick label="Text style" value="Default" />
              <Tools items={helpTools} />
              <span className="ml-[1px] h-full w-px bg-[#c4c4c4]" />
              <Grip />
              <Tools items={grayTools} />
            </div>
            <div className="flex h-[20px] items-center border-b border-[#9a9a9a]">
              <Grip />
              <Tools items={editTools} />
              <input aria-label="Page" defaultValue="6" className="h-[18px] w-[19px] bg-transparent text-center text-[11px]" />
              <Tools items={[["Next page", <P d="M6 3L12 9L6 15" w={1.700} />]]} />
              <span className="ml-[191px] h-full w-px bg-[#9da3b5]" />
            </div>
          </div>

          <div className="flex min-h-0 flex-1 bg-[#efefef]">
            <div className="flex min-w-0 flex-1 flex-col">
              <div className="flex min-h-0 flex-1">
                <main className="min-w-0 flex-1 bg-[#a5a5a5]"><Drawing /></main>
                <div className="flex w-[12px] flex-col items-center justify-between bg-[#f1f1f1] py-[4px]">
                  <svg viewBox="0 0 6 4" className="h-[3px] w-[5px]" aria-hidden="true"><path d="M0 4H6L3 0Z" fill="#333" /></svg>
                  <span className="h-[11px] w-[10px] rounded-[1px] border border-[#aaa] bg-[#e4e4e4]" />
                  <svg viewBox="0 0 6 4" className="h-[3px] w-[5px]" aria-hidden="true"><path d="M0 0H6L3 4Z" fill="#333" /></svg>
                </div>
              </div>
              <div className="flex h-[13px] shrink-0 items-center justify-between bg-[#f1f1f1] pl-[4px] pr-[4px]">
                <svg viewBox="0 0 4 6" className="h-[5px] w-[3px]" aria-hidden="true"><path d="M4 0V6L0 3Z" fill="#333" /></svg>
                <span className="h-[11px] w-[11px] rounded-[1px] border border-[#aaa] bg-[#e4e4e4]" />
                <svg viewBox="0 0 4 6" className="mr-[12px] h-[5px] w-[3px]" aria-hidden="true"><path d="M0 0V6L4 3Z" fill="#333" /></svg>
              </div>
            </div>
            <aside className="flex w-[21px] shrink-0 flex-col items-center border-l border-[#c2c2c2] bg-[#efefef]">
              <span className="my-[4px] h-[3px] w-[15px] border-y border-[#bbb]" />
              <div className="flex h-[183px] flex-col"><Tools items={sideTop} vertical /></div>
              <span className="my-[4px] h-[3px] w-[15px] border-y border-[#bbb]" />
              <div className="flex h-[202px] flex-col"><Tools items={sideBottom} vertical /></div>
            </aside>
          </div>

          <div className="flex h-[22px] shrink-0 items-center border-y border-[#c6c6c6] bg-[#efefef]">
            <Grip />
            <Tools items={bottomTools} />
            <span className="ml-auto h-full w-px bg-[#c4c4c4]" />
            <Grip />
            <Tools items={textToolsA} />
            <span className="w-[19px]" />
            <Tools items={textToolsB} />
            <span className="mr-[70px] h-full w-px bg-[#c4c4c4]" />
          </div>

          <footer className="flex h-[16px] shrink-0 items-center whitespace-nowrap bg-[#f0f0f0]">
            <span className="min-w-0 flex-1">Layout Box</span>
            <span className="w-[125px] border-l border-[#dcdcdc] pl-[3px]"><span className="mr-[8px]">1/7/16"</span><span>36.592401°</span></span>
            <span className="w-[54px] border-l border-[#dcdcdc] pl-[3px]">Page: 6</span>
            <span className="w-[143px] border-l border-[#dcdcdc] pl-[3px]">Object layer: Layout Box Borders</span>
            <span className="w-[160px] border-l border-[#dcdcdc] pl-[3px]">X: 23 9/16", Y: -1/16/16", Z: 0"</span>
            <span className="w-[54px] border-l border-[#dcdcdc] pl-[3px]">1214 x 798</span>
          </footer>
        </div>

        <div className="flex h-[29px] shrink-0 items-stretch border-b border-t-2 border-[#2a3a4e] bg-gradient-to-r from-[#8ba8cd] via-[#a2bbdc] to-[#7389a9]">
          <button type="button" aria-label="Start" className="flex w-[40px] items-center pl-[4px]">
            <svg viewBox="0 0 26 26" className="h-[25px] w-[25px]" aria-hidden="true">
              <circle cx="13" cy="13" r="12" fill="#2d5f94" stroke="#1f4368" />
              <path d="M3 9A11 11 0 0 1 23 9C17 12 9 8 3 9Z" fill="#86acd0" />
              <path d="M7 8C9 6 11 7 12.500 8V13C10 12 9 12 6 13Z" fill="#e0653a" />
              <path d="M13.500 8C16 9 18 9 20 7L19 12.500C17 14 15 14 13.500 13Z" fill="#8cbf47" />
              <path d="M6 14C9 13 11 13 12.500 14V19C10 18 8 18 5.500 19Z" fill="#5ea0da" />
              <path d="M13.500 14C15 15 17 15 19 13.500L18 19C16 20 15 20 13.500 19Z" fill="#f0c644" />
            </svg>
          </button>
          {taskItems.map(([name, open, icon]) => (
            <button
              key={name}
              type="button"
              aria-label={name}
              className={"flex w-[42px] items-center justify-center " + (open ? "border-x border-[#7d93b2] bg-gradient-to-b from-[#d9e8f7] to-[#aac6e6]" : "")}
            >
              <TaskIco>{icon}</TaskIco>
            </button>
          ))}
          <div className="flex flex-1 items-center bg-[#7389a9] text-[9px] text-[#e6edf5]">
            <span className="ml-[9px] w-[36px] whitespace-nowrap text-[8px]">Chief Inc</span>
            <span className="mb-[12px] w-[16px] pl-[4px]">»</span>
            <span className="w-[27px] text-[8px]">Adobe</span>
            <span className="mb-[12px] w-[15px] pl-[2px]">»</span>
            <svg viewBox="0 0 6 4" className="h-[4px] w-[6px]" aria-hidden="true"><path d="M0 4H6L3 0Z" fill="#fff" /></svg>
            <svg viewBox="0 0 48 14" className="ml-[8px] h-[14px] w-[48px]" fill="none" stroke="#fff" aria-hidden="true">
              <path d="M2.500 2V13" />
              <path d="M4 3H8L12 5V9H8L4 7Z" fill="#fff" />
              <path d="M20 3.500H28V9.500H20ZM22 12.500H28M18.500 4V12" />
              <path d="M36 5H38L41 2V12L38 9H36Z" fill="#fff" />
              <path d="M43 4C45 6 45 8 43 10M45 3C47.500 6 47.500 8 45 11" strokeWidth="0.800" />
            </svg>
            <div className="ml-auto mr-[5px] text-center text-[8px] leading-[11px] text-white">
              <div>6:58 PM</div>
              <div>8/27/2012</div>
            </div>
            <button type="button" aria-label="Show desktop" className="h-full w-[8px] border-l border-[#3d4f68] bg-[#5d7593]" />
          </div>
        </div>
      </div>
    </div>
  );
}
